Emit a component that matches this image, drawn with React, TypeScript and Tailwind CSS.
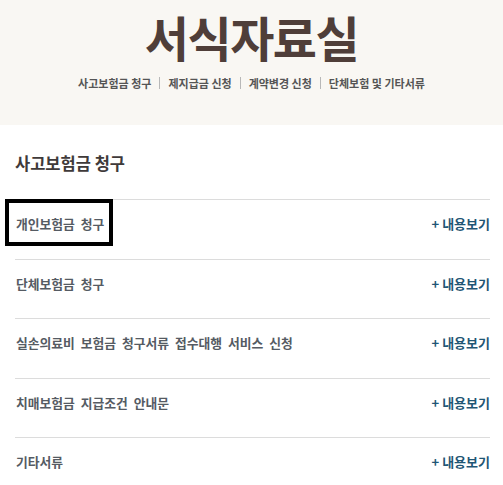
import React from "react";

const items = [
  "개인보험금 청구",
  "단체보험금 청구",
  "실손의료비 보험금 청구서류 접수대행 서비스 신청",
  "치매보험금 지급조건 안내문",
  "기타서류",
];

const nav = ["사고보험금 청구", "제지급금 신청", "계약변경 신청", "단체보험 및 기타서류"];

export default function App() {
  return (
    <div
      className="w-[503px] h-[485px] overflow-hidden bg-white"
      style={{ fontFamily: '"Noto Sans CJK KR", "Noto Sans", sans-serif' }}
    >
      <header className="h-[125px] bg-[#f9f7f3] flex flex-col items-center">
        <h1 className="mt-[7px] text-[48px] leading-[58px] font-bold tracking-[-1.5px] text-[#4f3e39]">
          서식자료실
        </h1>
        <nav className="mt-[11px] flex items-center text-[11px] leading-[14px] font-bold text-[#555]">
          {nav.map((n, i) => (
            <React.Fragment key={n}>
              {i > 0 && <span className="mx-[8px] w-px h-[12px] bg-[#b8b8b8]" />}
              <span>{n}</span>
            </React.Fragment>
          ))}
        </nav>
      </header>
      <section className="px-[15px] pr-[13px]">
        <h2 className="pt-[28px] pb-[26px] text-[16.5px] leading-[20px] font-bold text-[#3f3a3a]">
          사고보험금 청구
        </h2>
        <ul>
          {items.map((t, i) => (
            <li
              key={t}
              className="border-t border-[#dcdcdc] pt-[17px] pb-[27.5px] flex justify-between items-center text-[12.8px] leading-[14px] font-bold"
            >
              <span className="relative pl-px text-[#555b63] [word-spacing:3px]">
                {t}
                {i === 0 && (
                  <span className="absolute left-[-10px] top-[-18px] w-[108px] h-[47px] border-[4px] border-black" />
                )}
              </span>
              <span className="text-[13px] text-[#1f5675]">+ 내용보기</span>
            </li>
          ))}
        </ul>
      </section>
    </div>
  );
}
